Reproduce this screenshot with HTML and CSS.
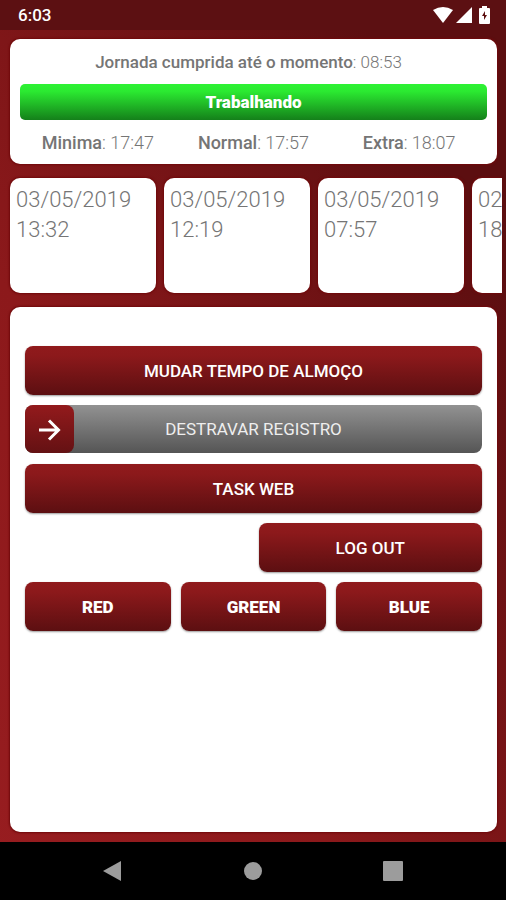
FILE: index.html
```html
<!DOCTYPE html>
<html lang="pt-BR">
<head>
<meta charset="utf-8">
<meta name="viewport" content="width=device-width, initial-scale=1">
<title>Jornada</title>
<link rel="stylesheet" href="styles.css">
</head>
<body>
<div class="app">
  <header class="status">
    <span>6:03</span>
    <span class="status-icons">
      <svg width="20" height="16" viewBox="0 0 20 16" fill="#fff"><path d="M0 3Q10-3 20 3L10 16Z"/></svg>
      <svg width="16" height="16" viewBox="0 0 16 16" fill="#fff"><path d="M16 0V16H0Z"/></svg>
      <svg width="11" height="18" viewBox="0 0 11 18"><path fill="#fff" d="M3 0H8V2H10Q11 2 11 3V17Q11 18 10 18H1Q0 18 0 17V3Q0 2 1 2H3Z"/><path fill="#5c1010" d="M6 5L3 10H5V14L8 9H6Z"/></svg>
    </span>
  </header>
  <main class="content">
    <section class="card summary">
      <p class="line total"><b>Jornada cumprida até o momento</b>: 08:53</p>
      <p class="state">Trabalhando</p>
      <div class="times">
        <p class="line"><b>Minima</b>: 17:47</p>
        <p class="line"><b>Normal</b>: 17:57</p>
        <p class="line"><b>Extra</b>: 18:07</p>
      </div>
    </section>
    <section class="records">
      <div class="card record">03/05/2019<br>13:32</div>
      <div class="card record">03/05/2019<br>12:19</div>
      <div class="card record">03/05/2019<br>07:57</div>
      <div class="card record">02/05/2019<br>18:02</div>
    </section>
    <section class="card actions">
      <button class="btn" type="button">MUDAR TEMPO DE ALMOÇO</button>
      <div class="unlock">
        <input id="unlock" class="unlock-range" type="range" min="0" max="100" value="0">
        <label class="unlock-label" for="unlock">DESTRAVAR REGISTRO</label>
        <svg class="unlock-arrow" width="49" height="49" viewBox="0 0 49 49" fill="none" stroke="#fff" stroke-width="3"><path d="M14 25H34M24 15.500L33.500 25L24 34.500"/></svg>
      </div>
      <button class="btn" type="button">TASK WEB</button>
      <div class="row halves"><button class="btn second" type="button">LOG OUT</button></div>
      <div class="row thirds">
        <button class="btn heavy" type="button">RED</button>
        <button class="btn heavy" type="button">GREEN</button>
        <button class="btn heavy" type="button">BLUE</button>
      </div>
    </section>
  </main>
  <nav class="nav">
    <button class="nav-btn" type="button" aria-label="Voltar"><svg width="20" height="20" viewBox="0 0 20 20" fill="#9c9c9c"><path d="M0 10L18 0V20Z"/></svg></button>
    <button class="nav-btn" type="button" aria-label="Início"><svg width="20" height="20" viewBox="0 0 20 20" fill="#9c9c9c"><circle cx="10" cy="10" r="9"/></svg></button>
    <button class="nav-btn" type="button" aria-label="Recentes"><svg width="20" height="20" viewBox="0 0 20 20" fill="#9c9c9c"><rect width="20" height="20" rx="1"/></svg></button>
  </nav>
</div>
</body>
</html>
```
FILE: styles.css
```css
* {
  box-sizing: border-box;
}

body {
  margin: 0;
  font-family: Roboto, "Liberation Sans", sans-serif;
  color: #757575;
}

p {
  margin: 0;
}

.app {
  display: flex;
  flex-direction: column;
  min-height: 100vh;
  background: linear-gradient(60deg, #981d20 0%, #8c191b 35%, #5c0e10 85%);
}

.status {
  display: flex;
  align-items: center;
  justify-content: space-between;
  height: 30px;
  padding: 0 16px 0 18px;
  background: #5c1012;
  color: #fff;
  font-size: 17px;
  font-weight: 500;
}

.status-icons {
  display: flex;
  align-items: center;
  gap: 3px;
}

.status-icons svg:last-child {
  margin-left: 4px;
}

.content {
  flex: 1;
  display: flex;
  flex-direction: column;
  gap: 14px;
  padding: 9px 9px 10px 10px;
}

.card {
  background: #fff;
  border-radius: 10px;
  box-shadow: 0 0 2px 1px #70090b;
}

.summary {
  padding: 10px 10px 8px;
}

.line {
  font-size: 18px;
  font-weight: 300;
  line-height: 26px;
  text-align: center;
}

.line b {
  font-weight: 500;
}

.total {
  padding-right: 10px;
  font-size: 17px;
}

.state {
  margin: 9px 0 10px;
  border-radius: 5px;
  background: linear-gradient(#2df233, #2bea31 20%, #14801a);
  color: #fff;
  font-size: 17px;
  font-weight: 900;
  line-height: 36px;
  text-align: center;
}

.times {
  display: grid;
  grid-template-columns: repeat(3, 1fr);
}

.records {
  display: flex;
  gap: 8px;
  overflow: hidden;
  margin: -4px -5px -4px -4px;
  padding: 4px 0 4px 4px;
}

.record {
  flex: 0 0 146px;
  height: 115px;
  padding: 7px 6px;
  font-size: 22px;
  font-weight: 300;
  line-height: 30px;
}

.actions {
  flex: 1;
  display: flex;
  flex-direction: column;
  gap: 10px;
  padding: 39px 15px 15px;
}

.btn {
  height: 49px;
  padding: 0;
  border: 0;
  border-radius: 8px;
  background: linear-gradient(#901a1c, #8c191b 20%, #5c0f11);
  box-shadow: 0 1px 2px #00000066;
  color: #fff;
  font: 500 17px Roboto, "Liberation Sans", sans-serif;
}

.heavy {
  font-weight: 900;
}

.row {
  display: grid;
  gap: 10px;
}

.halves {
  grid-template-columns: repeat(2, 1fr);
}

.second {
  grid-column: 2;
}

.thirds {
  grid-template-columns: repeat(3, 1fr);
}

.unlock {
  display: grid;
  height: 49px;
}

.unlock > * {
  grid-area: 1 / 1;
}

.unlock-range {
  appearance: none;
  width: 100%;
  height: 48px;
  margin: 0;
  border-radius: 8px;
  background: linear-gradient(#929292, #555);
}

.unlock-range::-webkit-slider-thumb {
  appearance: none;
  width: 49px;
  height: 48px;
  border-radius: 8px;
  background: linear-gradient(#931a1c, #641113);
}

.unlock-label {
  color: #eee;
  font-size: 17px;
  line-height: 49px;
  text-align: center;
  pointer-events: none;
}

.unlock-arrow {
  pointer-events: none;
}

.nav {
  display: flex;
  justify-content: center;
  gap: 120px;
  height: 58px;
  background: #000;
}

.nav-btn {
  display: flex;
  align-items: center;
  justify-content: center;
  width: 20px;
  padding: 0;
  border: 0;
  background: none;
}
```
